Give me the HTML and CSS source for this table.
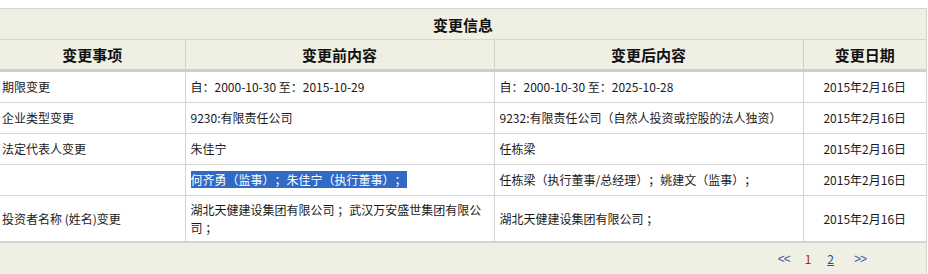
FILE: index.html
```html
<!DOCTYPE html>
<html lang="zh-CN">
<head>
<meta charset="utf-8">
<title>变更信息</title>
<link rel="stylesheet" href="styles.css">
</head>
<body>
<div class="panel">
  <table class="info">
    <colgroup>
      <col class="c1"><col class="c2"><col class="c3"><col class="c4">
    </colgroup>
    <thead>
      <tr class="title-row"><th colspan="4">变更信息</th></tr>
      <tr class="head-row">
        <th>变更事项</th>
        <th>变更前内容</th>
        <th>变更后内容</th>
        <th class="last">变更日期</th>
      </tr>
    </thead>
    <tbody>
      <tr>
        <td class="first">期限变更</td>
        <td>自：2000-10-30 至：2015-10-29</td>
        <td>自：2000-10-30 至：2025-10-28</td>
        <td class="date">2015年2月16日</td>
      </tr>
      <tr>
        <td class="first">企业类型变更</td>
        <td>9230:有限责任公司</td>
        <td>9232:有限责任公司（自然人投资或控股的法人独资）</td>
        <td class="date">2015年2月16日</td>
      </tr>
      <tr>
        <td class="first">法定代表人变更</td>
        <td>朱佳宁</td>
        <td>任栋梁</td>
        <td class="date">2015年2月16日</td>
      </tr>
      <tr>
        <td class="first"></td>
        <td><span class="selected">何齐勇（监事）；朱佳宁（执行董事）；</span></td>
        <td>任栋梁（执行董事/总经理）；姚建文（监事）；</td>
        <td class="date">2015年2月16日</td>
      </tr>
      <tr class="tall">
        <td class="first">投资者名称 (姓名)变更</td>
        <td>湖北天健建设集团有限公司 ；武汉万安盛世集团有限公司 ；</td>
        <td>湖北天健建设集团有限公司 ；</td>
        <td class="date">2015年2月16日</td>
      </tr>
    </tbody>
  </table>
  <div class="pager">
    <a class="arrow prev">&lt;&lt;</a>
    <span class="current">1</span>
    <a class="page">2</a>
    <a class="arrow next">&gt;&gt;</a>
  </div>
</div>
</body>
</html>
```

FILE: styles.css
```css
html, body {
  margin: 0;
  padding: 0;
  background: #ffffff;
}

body {
  font-family: "Noto Sans CJK TC", "Noto Sans CJK SC", "Noto Sans", sans-serif;
  font-size: 12px;
  color: #1a1a1a;
  text-spacing-trim: space-all;
}

.panel {
  margin-top: 8px;
  width: 927px;
  background: #f0efe3;
  border-top: 1px solid #d6d6cc;
  border-right: 1px solid #d6d6cc;
  box-sizing: border-box;
}

.info {
  width: 926px;
  border-collapse: collapse;
  table-layout: fixed;
}

.c1 { width: 185px; }
.c2 { width: 309px; }
.c3 { width: 309px; }
.c4 { width: 123px; }

.title-row th,
.head-row th {
  font-family: "Noto Sans CJK SC", sans-serif;
}

.title-row th {
  height: 30px;
  padding: 0;
  font-size: 15px;
  font-weight: bold;
  color: #111;
  text-align: center;
  background: #f0efe3;
  border-bottom: 1px solid #d6d6cc;
}

.head-row th {
  height: 29px;
  padding: 0;
  font-size: 15px;
  font-weight: bold;
  color: #111;
  text-align: center;
  background: #f0efe3;
  border-left: 1px solid #d0d0c8;
  border-bottom: 3px solid #cfcfcb;
}

.head-row th:first-child {
  border-left: none;
}

.info tbody td {
  height: 30px;
  padding: 0 5px;
  line-height: 18px;
  background: #ffffff;
  border-left: 1px solid #d4d4d4;
  border-bottom: 1px solid #d4d4d4;
  vertical-align: middle;
  text-align: left;
  white-space: normal;
  word-break: break-all;
}

.info tbody td.first {
  border-left: none;
  padding-left: 2px;
}

.info tbody td.date {
  text-align: center;
  padding: 0;
}

.info tbody tr.tall td {
  height: 45px;
  border-bottom: 2px solid #d4d4d0;
}

.selected {
  background: #316ac5;
  color: #ffffff;
}

.pager {
  height: 31px;
  display: flex;
  align-items: center;
  justify-content: flex-end;
  padding-right: 60px;
  font-size: 12px;
}

.pager .arrow {
  font-family: "Liberation Sans", sans-serif;
  color: #3a5ba8;
  letter-spacing: -1px;
}

.pager .prev {
  margin-right: 0;
}

.pager .current {
  color: #b22222;
  margin-left: 15px;
}

.pager .page {
  color: #2a4a9a;
  text-decoration: underline;
  margin-left: 16px;
}

.pager .next {
  margin-left: 20px;
}
```
